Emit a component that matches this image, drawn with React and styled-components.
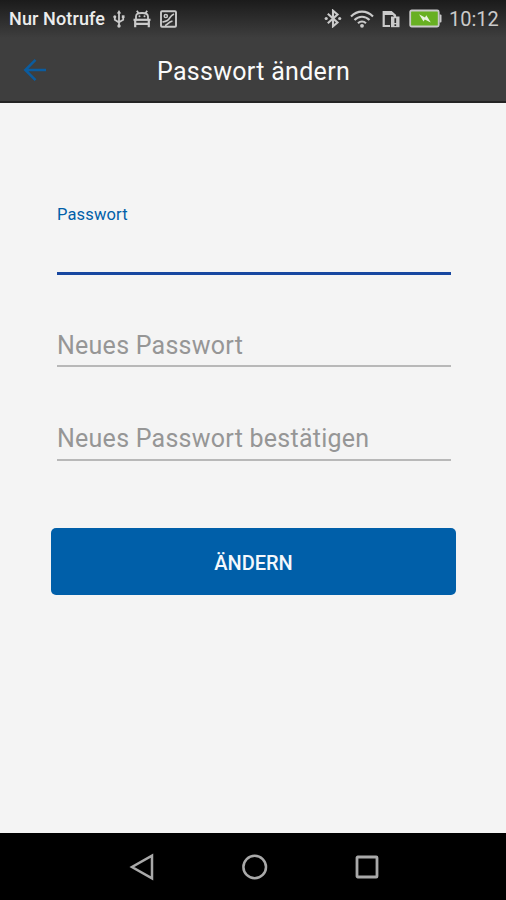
import React from 'react';
import styled, { createGlobalStyle } from 'styled-components';

const colors = {
    primary: '#005fa9',
    line: '#1747a0',
    header: '#3e3e3e',
    base: '#f4f4f4',
    hint: '#969696',
    status: '#cacaca',
    nav: '#a9a9a9',
};

const GlobalStyle = createGlobalStyle`
    * {
        box-sizing: border-box;
        margin: 0;
        padding: 0;
    }

    body {
        font-family: Roboto, "Liberation Sans", sans-serif;
        background-color: ${colors.base};
    }
`;

const Screen = styled.div`
    width: 506px;
    height: 900px;
    background-color: ${colors.base};
    display: flex;
    flex-direction: column;
    overflow: hidden;
`;

const StatusBar = styled.div`
    height: 38px;
    padding: 0 8px 1px 9px;
    background: linear-gradient(#1b1b1b, ${colors.header});
    color: ${colors.status};

    display: flex;
    justify-content: space-between;
    align-items: center;

    svg {
        display: block;
        flex: none;
    }
`;

const StatusGroup = styled.div`
    display: flex;
    align-items: center;
    gap: ${({ $gap }) => $gap}px;
`;

const Carrier = styled.span`
    width: 95px;
    font-size: 18px;
    line-height: 22px;
    font-weight: 500;
    letter-spacing: 0.12px;
    color: #ececec;
    white-space: nowrap;
`;

const Clock = styled.span`
    width: 49px;
    margin-left: -1px;
    font-size: 20px;
    line-height: 22px;
    white-space: nowrap;
`;

const Header = styled.header`
    height: 65px;
    background-color: ${colors.header};
    border-bottom: 2px solid #242424;

    display: grid;
    grid-template-columns: 70px 1fr 70px;
    align-items: center;
`;

const BackBtn = styled.button`
    border: none;
    background: none;
    color: #0b5c9f;

    display: flex;
    justify-content: center;
`;

const Title = styled.h1`
    padding: 4px 0 0 1px;
    font-size: 25px;
    line-height: 30px;
    font-weight: 400;
    letter-spacing: 0.3px;
    color: #fafafa;
    text-align: center;
    white-space: nowrap;
`;

const Form = styled.form`
    flex: 1;
    padding: 98px 50px 0 51px;

    display: flex;
    flex-direction: column;
`;

const Field = styled.label`
    height: ${({ $height }) => $height}px;
    margin: 0 5px 0 6px;
    border-bottom: ${({ $active }) => ($active ? `3px solid ${colors.line}` : '2px solid #b8b8b8')};

    display: flex;
    flex-direction: column;
    justify-content: ${({ $active }) => ($active ? 'flex-start' : 'flex-end')};
`;

const Hint = styled.span`
    font-size: 25px;
    line-height: 30px;
    padding-bottom: ${({ $bottom }) => $bottom}px;
    letter-spacing: 0.25px;
    color: ${colors.hint};
    white-space: nowrap;
`;

const FloatingLabel = styled.span`
    font-size: 16.5px;
    line-height: 20px;
    padding-top: 4px;
    letter-spacing: 0.15px;
    color: ${colors.primary};
`;

const SubmitBtn = styled.button`
    height: 67px;
    margin-top: 67px;
    padding-top: 2px;
    border: none;
    border-radius: 5px;
    background-color: ${colors.primary};
    color: #f4f8fc;
    font-family: inherit;
    font-size: 20px;
    font-weight: 500;
`;

const NavBar = styled.nav`
    height: 67px;
    padding-left: 3px;
    background-color: #000;
    color: ${colors.nav};

    display: flex;
    justify-content: center;
    align-items: center;
    gap: 84px;
`;

const NavBtn = styled.button`
    border: none;
    background: none;
    color: inherit;

    display: flex;
`;

const UsbIcon = () => (
    <svg width="12" height="18" viewBox="0 0 12 18" fill="none" stroke="currentColor" strokeWidth="1.8">
        <path d="M6 2v14M1.8 6.5v3.200L6 12.600M10.200 6v3.700L6 12.200" />
        <path d="M6 0l2.200 3.500H3.800z" fill="currentColor" stroke="none" />
        <circle cx="6" cy="16" r="1.700" fill="currentColor" stroke="none" />
        <circle cx="1.800" cy="6.800" r="1.500" fill="currentColor" stroke="none" />
        <path d="M8.800 5.300h2.700V8H8.800z" fill="currentColor" stroke="none" />
    </svg>
);

const DebugIcon = () => (
    <svg width="18" height="18" viewBox="0 0 18 18" fill="none" stroke="currentColor" strokeWidth="1.8">
        <path d="M3 9V6.500C3 4 5 3 9 3s6 1 6 3.500V9M3.800 .8l2 2.700M14.200 .8l-2 2.700" />
        <path d="M.5 9.800h17" strokeWidth="2.200" />
        <path d="M2.200 10v7.200M15.800 10v7.200M2.200 13.900h13.600" strokeWidth="2.200" />
        <circle cx="6.500" cy="6.200" r="1" fill="currentColor" stroke="none" />
        <circle cx="11.500" cy="6.200" r="1" fill="currentColor" stroke="none" />
    </svg>
);

const PictureIcon = () => (
    <svg width="17" height="18" viewBox="0 0 17 18" fill="none" stroke="currentColor" strokeWidth="1.900">
        <rect x="1" y="1.300" width="15" height="15.400" rx="1" />
        <circle cx="5.800" cy="6" r="1.600" strokeWidth="1.500" />
        <path d="M2.500 12.300c2.500-1.500 4.500-.3 6.300-3S11 5.500 14 4M5 15.500c2.500-.5 3-3.500 7.500-4.500" strokeWidth="1.600" />
    </svg>
);

const BluetoothIcon = () => (
    <svg width="18" height="19" viewBox="0 0 18 19" fill="none" stroke="currentColor" strokeWidth="2.100">
        <path d="M3.800 4.800l9.700 8.700L9 17.300V1.700l4.500 3.800-9.700 8.700" />
        <circle cx="2.200" cy="9.500" r="1.600" fill="currentColor" stroke="none" />
        <circle cx="15.700" cy="9.500" r="1.600" fill="currentColor" stroke="none" />
    </svg>
);

const WifiIcon = () => (
    <svg width="24" height="18" viewBox="0 0 24 18" fill="none" stroke="currentColor" strokeWidth="2.100">
        <path d="M1 6.500c6.200-6.500 15.800-6.500 22 0M4.500 10c4.300-4.400 10.700-4.400 15 0M8 13.300c2.400-2.400 5.600-2.400 8 0" />
        <circle cx="12" cy="15.800" r="1.900" fill="currentColor" stroke="none" />
    </svg>
);

const SimIcon = () => (
    <svg width="18" height="18" viewBox="0 0 18 18" fill="none" stroke="currentColor" strokeWidth="2.200">
        <path d="M8 16H1.700V2.200H9l4 3.600V8" />
        <path d="M1 1h8.500l4.500 4H1z" fill="currentColor" stroke="none" />
        <path d="M9 6.500h8.500V17.200H9z" fill="currentColor" stroke="none" />
        <path d="M13.300 8.200v4.800M13.300 14.200v1.700" stroke="#2c2c2c" strokeWidth="1.700" />
    </svg>
);

const BatteryIcon = () => (
    <svg width="33" height="19" viewBox="0 0 33 19">
        <rect x="1.200" y="1.500" width="28.500" height="16" rx="1.500" fill="#68b022" stroke="currentColor" strokeWidth="1.800" />
        <path d="M30.500 5.500h1q1 0 1 1v6q0 1-1 1h-1z" fill="currentColor" />
        <path d="M10 5.200l6 3.200 1.300-2.200 4.500 7.300-6-3-1.300 2z" fill="#e9f3df" />
    </svg>
);

const BackIcon = () => (
    <svg width="24" height="24" viewBox="0 0 24 24" fill="none" stroke="currentColor" strokeWidth="2.500">
        <path d="M23 12H2.500M12.500 1.800L2.300 12l10.200 10.200" />
    </svg>
);

const App = () => {
    return (
        <>
            <GlobalStyle />
            <Screen>
                <StatusBar>
                    <StatusGroup $gap={8.5}>
                        <Carrier>Nur Notrufe</Carrier>
                        <UsbIcon />
                        <DebugIcon />
                        <PictureIcon />
                    </StatusGroup>
                    <StatusGroup $gap={8.3}>
                        <BluetoothIcon />
                        <WifiIcon />
                        <SimIcon />
                        <BatteryIcon />
                        <Clock>10:12</Clock>
                    </StatusGroup>
                </StatusBar>
                <Header>
                    <BackBtn type="button" aria-label="Zurück">
                        <BackIcon />
                    </BackBtn>
                    <Title>Passwort ändern</Title>
                </Header>
                <Form>
                    <Field $active $height={74}>
                        <FloatingLabel>Passwort</FloatingLabel>
                    </Field>
                    <Field $height={92}>
                        <Hint $bottom={4}>Neues Passwort</Hint>
                    </Field>
                    <Field $height={94}>
                        <Hint $bottom={5}>Neues Passwort bestätigen</Hint>
                    </Field>
                    <SubmitBtn type="button">ÄNDERN</SubmitBtn>
                </Form>
                <NavBar>
                    <NavBtn aria-label="Zurück">
                        <svg width="28" height="28" viewBox="0 0 28 28" fill="none" stroke="currentColor" strokeWidth="2.500">
                            <path d="M23 2.700v22.600L3 14z" />
                        </svg>
                    </NavBtn>
                    <NavBtn aria-label="Start">
                        <svg width="28" height="28" viewBox="0 0 28 28" fill="none" stroke="currentColor" strokeWidth="2.500">
                            <circle cx="13.700" cy="14" r="11.300" />
                        </svg>
                    </NavBtn>
                    <NavBtn aria-label="Übersicht">
                        <svg width="28" height="28" viewBox="0 0 28 28" fill="none" stroke="currentColor" strokeWidth="2.800">
                            <rect x="4" y="4" width="20" height="20" rx=".8" />
                        </svg>
                    </NavBtn>
                </NavBar>
            </Screen>
        </>
    );
};

export default App;
